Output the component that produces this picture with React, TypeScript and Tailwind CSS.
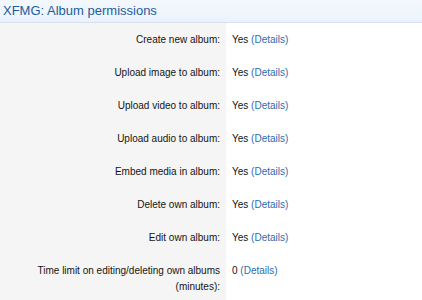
const rows = [
  { label: "Create new album:", value: "Yes" },
  { label: "Upload image to album:", value: "Yes" },
  { label: "Upload video to album:", value: "Yes" },
  { label: "Upload audio to album:", value: "Yes" },
  { label: "Embed media in album:", value: "Yes" },
  { label: "Delete own album:", value: "Yes" },
  { label: "Edit own album:", value: "Yes" },
  { label: "Time limit on editing/deleting own albums (minutes):", value: "0" },
];

export default function App() {
  return (
    <div className="w-[422px] h-[300px] overflow-hidden bg-white font-['Liberation_Sans',Arial,sans-serif]">
      <div className="h-[23px] border-b border-[#d7e2ee] bg-gradient-to-b from-[#f3f8fe] to-[#eaf3fc] px-[3px] text-[13px] leading-[21px] text-[#1f5c9c]">
        XFMG: Album permissions
      </div>
      <div className="flex flex-col">
        {rows.map((row) => (
          <div key={row.label} className="flex text-[10px] leading-[16px] text-[#141414]">
            <div className="w-[226px] shrink-0 bg-[#f5f5f5] pt-[9px] pb-[8px] pr-[6px] pl-[36px] text-right">
              {row.label}
            </div>
            <div className="flex-1 pt-[9px] pb-[8px] pl-[6px]">
              {row.value} <span className="text-[#2b6cb0]">(Details)</span>
            </div>
          </div>
        ))}
      </div>
    </div>
  );
}
